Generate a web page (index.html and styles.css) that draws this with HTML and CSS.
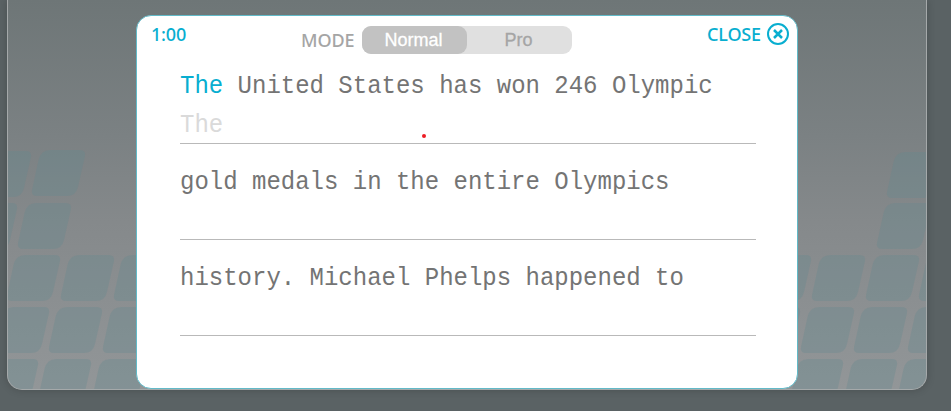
FILE: index.html
```html
<!DOCTYPE html>
<html lang="en">
<head>
<meta charset="utf-8">
<title>Typing test</title>
<link rel="stylesheet" href="styles.css">
</head>
<body>
<main class="stage">
  <svg class="keys" viewBox="8 0 918 389" aria-hidden="true">
    <defs>
      <path id="key" d="M18 0H48Q54 0 53 6L46 37Q44 46 35 46H5Q-1 46 0 40L6.500 10Q9 0 18 0Z"/>
    </defs>
    <use href="#key" x="-22" y="151"/><use href="#key" x="32" y="150"/>
    <use href="#key" x="-36" y="203"/><use href="#key" x="18" y="203"/>
    <use href="#key" x="7" y="255"/><use href="#key" x="61" y="255"/><use href="#key" x="114" y="255"/>
    <use href="#key" x="-4" y="307"/><use href="#key" x="49" y="307"/><use href="#key" x="103" y="307"/>
    <use href="#key" x="-15" y="359"/><use href="#key" x="38" y="359"/><use href="#key" x="92" y="359"/>
    <use href="#key" x="887" y="152"/><use href="#key" x="877" y="203"/>
    <use href="#key" x="758" y="255"/><use href="#key" x="812" y="255"/><use href="#key" x="866" y="255"/><use href="#key" x="919" y="255"/>
    <use href="#key" x="747" y="307"/><use href="#key" x="801" y="307"/><use href="#key" x="854" y="307"/><use href="#key" x="908" y="307"/>
    <use href="#key" x="790" y="359"/><use href="#key" x="844" y="359"/><use href="#key" x="897" y="359"/>
  </svg>
  <section class="dialog">
    <header class="bar">
      <span class="timer">1:00</span>
      <div class="mode">
        <span class="mode-label">MODE</span>
        <div class="toggle"><span class="option active">Normal</span><span class="option">Pro</span></div>
      </div>
      <div class="close">
        <span class="close-label">CLOSE</span>
        <svg class="close-icon" viewBox="0 0 22 22" aria-hidden="true"><circle cx="11" cy="11" r="10"/><path d="M7 7 15 15M15 7 7 15"/></svg>
      </div>
    </header>
    <div class="lines">
      <div class="line">
        <p class="text"><span class="current">The</span> United States has won 246 Olympic</p>
        <p class="text typed">The</p>
        <i class="dot"></i>
      </div>
      <div class="line"><p class="text">gold medals in the entire Olympics</p></div>
      <div class="line"><p class="text">history. Michael Phelps happened to</p></div>
    </div>
  </section>
</main>
</body>
</html>
```
FILE: styles.css
```css
* { box-sizing: border-box; }
body {
  margin: 0;
  height: 411px;
  overflow: hidden;
  background: #5a6264;
}
.stage {
  position: relative;
  width: 920px;
  height: 390px;
  margin-left: 7px;
  padding: 15px 0 0 128px;
  border: 1px solid #a5a9aa;
  border-top: 0;
  border-radius: 0 0 15px 15px;
  background: linear-gradient(#6e7677, #7b8183 35%, #85898b 57%, #929698);
  box-shadow: 0 0 8px rgba(0, 0, 0, .2);
  overflow: hidden;
}
.keys {
  position: absolute;
  left: 0;
  top: 0;
  width: 918px;
  height: 389px;
  fill: rgba(98, 138, 144, .32);
}
.dialog {
  position: relative;
  width: 662px;
  height: 374px;
  border: 1px solid #62bac8;
  border-radius: 15px;
  background: #fff;
}
.bar {
  display: flex;
  height: 50px;
  padding: 7px 8px 0 14px;
  font: 500 18px/22px "Noto Sans", sans-serif;
  color: #08aed0;
}
.timer { width: 150px; letter-spacing: -.2px; }
.mode { display: flex; margin-top: 3px; color: #a5a5a5; }
.mode-label { width: 61px; line-height: 28px; letter-spacing: -.1px; }
.toggle {
  display: flex;
  width: 210px;
  height: 28px;
  border-radius: 9px;
  background: #e0e0e0;
  font: 18px/28px "Liberation Sans", sans-serif;
  -webkit-text-stroke: .3px currentColor;
}
.option { width: 105px; padding-right: 2px; text-align: center; }
.active { border-radius: 9px; background: #c2c2c2; color: #fff; }
.close { display: flex; gap: 6px; margin-left: auto; }
.close-label { letter-spacing: -.15px; }
.close-icon {
  width: 22px;
  height: 22px;
  fill: none;
  stroke: #08aed0;
  stroke-width: 2;
}
.close-icon path { stroke-width: 2.500; }
.lines { width: 576px; margin-left: 43px; }
.line {
  position: relative;
  height: 96px;
  border-bottom: 1px solid #b9b9b9;
}
.line:first-child { height: 78px; }
.text {
  width: 640px;
  margin: 0;
  padding-top: 19px;
  font: 26.667px/38px "Liberation Mono", monospace;
  color: #747474;
  white-space: pre;
  transform: scaleX(.9);
  transform-origin: left;
}
.line:first-child .text { padding-top: 1px; }
.current { color: #08aed0; }
.line:first-child .typed { color: #dadada; }
.dot {
  position: absolute;
  left: 242px;
  bottom: 5px;
  width: 4px;
  height: 4px;
  border-radius: 50%;
  background: #ed1c24;
}
```
